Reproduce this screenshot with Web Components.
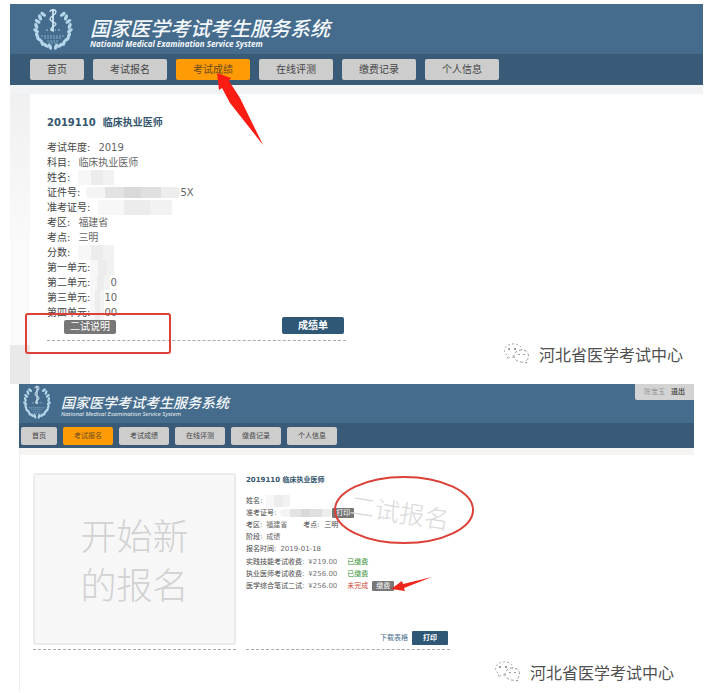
<!DOCTYPE html>
<html lang="zh-CN">
<head>
<meta charset="utf-8">
<title>国家医学考试考生服务系统</title>
<style>
  * { box-sizing: border-box; }
  body {
    margin: 0;
    background: #fff;
    color: #666;
    font: 10px/15px "DejaVu Sans", "Noto Sans CJK SC", sans-serif;
  }
  main { padding-top: 4px; }
</style>
</head>
<body>
<main>
  <score-screen></score-screen>
  <apply-screen></apply-screen>
</main>

<script>
(function () {
  'use strict';

  var TABS = ['首页', '考试报名', '考试成绩', '在线评测', '缴费记录', '个人信息'];

  function define(name, html, setup) {
    var template = document.createElement('template');
    template.innerHTML = '<style>* { box-sizing: border-box; }</style>' + html;
    customElements.define(name, class extends HTMLElement {
      constructor() {
        super();
        this.attachShadow({ mode: 'open' }).appendChild(template.content.cloneNode(true));
      }
      connectedCallback() {
        if (setup) setup(this, this.shadowRoot);
      }
    });
  }

  /* Laurel wreath: one side is generated and mirrored for the other. */
  function leaves() {
    var out = '';
    for (var i = 0; i < 10; i++) {
      var a = (100 + i * 15) * Math.PI / 180;
      var x = 20 + 17 * Math.cos(a);
      var y = 21 + 18 * Math.sin(a);
      out += '<ellipse cx="' + x.toFixed(1) + '" cy="' + y.toFixed(1) + '" rx="3.2" ry="1.7" transform="rotate(' +
        (i % 2 ? 35 : 70) + ' ' + x.toFixed(1) + ' ' + y.toFixed(1) + ')"/>';
    }
    return out;
  }

  define('exam-logo',
    '<style>:host { display: block; flex: none; } svg { display: block; width: 100%; height: 100%; }</style>' +
    '<svg viewBox="0 0 40 42" preserveAspectRatio="none" aria-hidden="true">' +
      '<g fill="#b4d6ea">' + leaves() + '</g>' +
      '<g fill="#b4d6ea" transform="translate(40 0) scale(-1 1)">' + leaves() + '</g>' +
      '<path d="M20 1v22" stroke="#e2f2fb" stroke-width="1.6"/>' +
      '<path d="M17 4c0-3 6-3 6 0s-6 4-6 7 6 3 6 5-5 3-5 5 3 2 3 2" fill="none" stroke="#cfe8f6" stroke-width="1.3"/>' +
      '<path d="M13 22h2m2 0h1m4 0h1m2 0h2" stroke="#a9cfe5"/>' +
      '<path d="M8 28h24M11 30h18M14 33h12M15 35h10" stroke="#83b0ce" stroke-dasharray="2 1"/>' +
    '</svg>');

  define('nav-tab',
    '<style>' +
      ':host { display: block; }' +
      'button {' +
        'display: block; height: var(--tab-height); padding: 0 var(--tab-pad);' +
        'border: 0; border-radius: 2px; background: #cdcdcd; color: #444;' +
        'font: inherit; font-size: var(--tab-font); line-height: 1; white-space: nowrap;' +
      '}' +
      ':host([active]) button { background: #ff9b05; color: #6b4a1c; }' +
    '</style>' +
    '<button type="button"><slot></slot></button>');

  define('site-banner',
    '<style>' +
      ':host {' +
        '--tab-height: 21px; --tab-pad: 17px; --tab-font: 10px;' +
        '--logo-width: 40px; --logo-height: 42px;' +
        'display: block; position: relative; background: #456c8c;' +
      '}' +
      ':host([compact]) { --tab-height: 18px; --tab-pad: 11px; --tab-font: 7px; --logo-width: 28px; --logo-height: 34px; }' +
      'header { display: flex; height: 50px; padding: 4px 0 0 23px; gap: 17px; }' +
      'exam-logo { width: var(--logo-width); height: var(--logo-height); }' +
      '.names { padding-top: 11px; color: #f4f8fb; font-style: italic; white-space: nowrap; }' +
      'h1 { margin: 0; font: italic 500 20px/20px "Liberation Sans", "Noto Sans CJK SC", sans-serif; }' +
      'p { margin: 0; font: italic 700 8px/10px "Open Sans", sans-serif; }' +
      'nav { display: flex; gap: 9px; padding: 5px 0 5px 20px; background: #395b78; }' +
      ':host([compact]) header { height: 39px; padding: 1px 0 0 4px; gap: 10px; }' +
      ':host([compact]) h1 { font-size: 14px; line-height: 14px; }' +
      ':host([compact]) p { font-size: 6px; line-height: 8px; font-weight: 400; }' +
      ':host([compact]) nav { gap: 6px; padding: 4px 0 3px 2px; }' +
      '.user { position: absolute; top: 0; right: 0; }' +
    '</style>' +
    '<header><exam-logo></exam-logo><div class="names">' +
      '<h1>国家医学考试考生服务系统</h1><p>National Medical Examination Service System</p>' +
    '</div></header>' +
    '<nav></nav><div class="user"><slot></slot></div>',
    function (host, root) {
      root.querySelector('nav').innerHTML = TABS.map(function (tab) {
        return '<nav-tab' + (tab === host.getAttribute('current') ? ' active' : '') + '>' + tab + '</nav-tab>';
      }).join('');
    });

  define('info-row',
    '<style>' +
      ':host { display: flex; align-items: center; height: var(--row, 15px); white-space: nowrap; }' +
      '.label { margin-right: var(--label-gap, 8px); color: #444; }' +
    '</style>' +
    '<span class="label"></span><slot></slot>',
    function (host, root) {
      root.querySelector('.label').textContent = host.getAttribute('label') + ':';
    });

  /* Pixelated patch over private data. */
  define('mosaic-patch',
    '<style>' +
      ':host {' +
        'display: inline-block; height: 100%; border-radius: 4px;' +
        'background:' +
          'linear-gradient(90deg, #f4f4f4 0 20%, #e3e3e3 20% 40%, #d9d9d9 40% 58%, #e0e0e0 58% 80%, #ededed 80%);' +
      '}' +
      ':host([light]) { background: linear-gradient(90deg, #f7f7f7 0 35%, #ececec 35% 70%, #f2f2f2 70%); border-radius: 0; }' +
    '</style>');

  define('wechat-mark',
    '<style>' +
      ':host {' +
        'display: flex; align-items: center; gap: 9px; color: #505050; white-space: nowrap;' +
        'font: 16px/20px "Noto Sans CJK SC", sans-serif; text-shadow: -1px -1px 0 #fff;' +
      '}' +
      'svg { display: block; width: 27px; height: 21px; }' +
    '</style>' +
    '<svg viewBox="0 0 27 21" fill="none" aria-hidden="true">' +
      '<path d="M11 14l-3 0-4 2 1-3C-1 9 1 2 9 1c6-1 10 3 10 6" stroke="#aaa" stroke-dasharray="2 2"/>' +
      '<path d="M19 7c-5 0-8 3-8 6 0 4 5 7 10 6l3 1-1-2c5-4 2-11-4-11z" stroke="#999" stroke-dasharray="3 2"/>' +
      '<path d="M6 5v2M12 5v2M16 11v1M21 11v1" stroke="#777" stroke-width="1.4"/>' +
    '</svg><slot></slot>');

  define('score-screen',
    '<style>' +
      ':host { display: block; position: relative; margin: 0 6px 0 10px; }' +
      '.body { padding: 9px 0 0 20px; background: linear-gradient(#f1f3f5 0 9px, #f0f0f0 9px, #fafafa 160px 260px, #e9e9e9 260px); }' +
      'section { padding: 21px 17px 43px; background: #fff; }' +
      '.record { max-width: 299px; border-bottom: 1px dashed #aaa; }' +
      'h2 { margin: 0 0 9px; color: #35566f; font-size: 10px; line-height: 16px; white-space: pre; }' +
      '.actions { display: flex; justify-content: space-between; align-items: flex-end; margin-top: -3px; padding: 0 2px 6px 17px; }' +
      'button { border: 0; border-radius: 2px; padding: 0 6px; height: 14px; background: #777; color: #fff; font: inherit; line-height: 1; }' +
      '.primary { height: 17px; padding: 0 16px; background: #2f5877; font-weight: 700; }' +
      '.frame { position: absolute; left: 15px; top: 309px; width: 146px; height: 41px; border: 2px solid #dc4038; border-radius: 3px; }' +
      '.arrow { position: absolute; left: 206px; top: 68px; width: 50px; height: 76px; }' +
      'wechat-mark { position: absolute; right: 20px; bottom: 20px; }' +
    '</style>' +
    '<site-banner current="考试成绩"></site-banner>' +
    '<div class="body"><section><div class="record">' +
      '<h2>2019110  临床执业医师</h2>' +
      '<info-row label="考试年度">2019</info-row>' +
      '<info-row label="科目">临床执业医师</info-row>' +
      '<info-row label="姓名"><mosaic-patch light style="width:36px"></mosaic-patch></info-row>' +
      '<info-row label="证件号" style="--label-gap:6px"><mosaic-patch style="width:94px;height:11px"></mosaic-patch>5X</info-row>' +
      '<info-row label="准考证号"><mosaic-patch light style="width:74px"></mosaic-patch></info-row>' +
      '<info-row label="考区">福建省</info-row>' +
      '<info-row label="考点">三明</info-row>' +
      '<info-row label="分数"><mosaic-patch light style="width:36px"></mosaic-patch></info-row>' +
      '<info-row label="第一单元" style="--label-gap:0px"><mosaic-patch light style="width:24px"></mosaic-patch></info-row>' +
      '<info-row label="第二单元" style="--label-gap:0px"><mosaic-patch light style="width:20px"></mosaic-patch>0</info-row>' +
      '<info-row label="第三单元" style="--label-gap:0px"><mosaic-patch light style="width:14px"></mosaic-patch>10</info-row>' +
      '<info-row label="第四单元" style="--label-gap:0px"><mosaic-patch light style="width:14px"></mosaic-patch>00</info-row>' +
      '<div class="actions"><button type="button">二试说明</button><button type="button" class="primary">成绩单</button></div>' +
    '</div></section></div>' +
    '<div class="frame"></div>' +
    '<svg class="arrow" viewBox="0 0 50 76" aria-hidden="true"><path d="M1 1L15 6 13 9 24 26 47 73 14 31 6 16 3 18z" fill="#fb1d13"/></svg>' +
    '<wechat-mark>河北省医学考试中心</wechat-mark>');

  define('apply-screen',
    '<style>' +
      ':host { display: block; position: relative; margin: 0 15px 0 19px; font-size: 7px; line-height: 12px; --row: 12px; --label-gap: 4px; }' +
      '.user { display: flex; gap: 6px; height: 16px; align-items: center; padding: 0 9px; background: #d3d3d3; color: #999; border-radius: 0 0 0 2px; }' +
      '.user a { color: #555; font-weight: 700; text-decoration: none; }' +
      '.body { padding-top: 7px; background: #f5f4f3; border-left: 1px solid #eee; }' +
      'section {' +
        'display: grid; grid-template-columns: minmax(0, 203px) minmax(0, 204px); gap: 10px;' +
        'padding: 18px 0 42px 13px; background: #fff;' +
      '}' +
      '.start, .record { border-bottom: 1px dashed #aaa; }' +
      '.start { padding-bottom: 4px; }' +
      '.start button {' +
        'display: block; width: 100%; height: 172px; border: 2px solid #ebebeb; border-radius: 3px; background: #f7f7f7;' +
        'color: #d2d2d2; font: 300 36px/49px "Noto Sans CJK SC", sans-serif;' +
      '}' +
      '.record { display: flex; flex-direction: column; padding: 1px 2px 4px 0; }' +
      'h2 { margin: 0 0 9px; color: #35566f; font-size: 7px; line-height: 12px; }' +
      '.fees { display: grid; grid-template-columns: auto auto auto 1fr; column-gap: 4px; margin-top: 1px; grid-auto-rows: 12px; align-items: center; color: #777; white-space: nowrap; }' +
      '.fees b { font-weight: 400; color: #444; }' +
      '.paid, .due { margin-left: 6px; }' +
      '.paid { color: #2f8f2f; }' +
      '.due { color: #cf4a35; }' +
      '.second { margin-left: 16px; color: #444; }' +
      'button.small { border: 0; border-radius: 1px; height: 10px; padding: 0 4px; background: #777; color: #fff; font: inherit; line-height: 1; }' +
      '.fees .small { justify-self: start; }' +
      '.actions { display: flex; justify-content: flex-end; align-items: center; gap: 4px; margin-top: auto; }' +
      '.actions a { color: #47708f; text-decoration: none; }' +
      '.actions button { border: 0; border-radius: 1px; height: 14px; padding: 0 11px; background: #2f5877; color: #fff; font: inherit; font-weight: 700; line-height: 1; }' +
      '.stamp { position: absolute; left: 331px; top: 112px; color: #d9d9d9; font: 300 25px/30px "Noto Sans CJK SC", sans-serif; transform: rotate(9deg); }' +
      '.ring { position: absolute; left: 314px; top: 91px; width: 142px; height: 70px; }' +
      '.arrow { position: absolute; left: 372px; top: 192px; width: 42px; height: 16px; }' +
      'wechat-mark { position: absolute; right: 20px; bottom: 10px; }' +
    '</style>' +
    '<site-banner compact current="考试报名"><div class="user"><span>陈宝玉</span><a href="#">退出</a></div></site-banner>' +
    '<div class="body"><section>' +
      '<div class="start"><button type="button">开始新<br>的报名</button></div>' +
      '<div class="record">' +
        '<h2>2019110 临床执业医师</h2>' +
        '<info-row label="姓名"><mosaic-patch light style="width:24px"></mosaic-patch></info-row>' +
        '<info-row label="准考证号"><mosaic-patch style="width:52px;height:8px"></mosaic-patch><button type="button" class="small">打印</button></info-row>' +
        '<info-row label="考区">福建省<span class="second">考点:&nbsp; 三明</span></info-row>' +
        '<info-row label="阶段">成绩</info-row>' +
        '<info-row label="报名时间">2019-01-18</info-row>' +
        '<div class="fees">' +
          '<b>实践技能考试收费:</b><span>¥219.00</span><span class="paid">已缴费</span><i></i>' +
          '<b>执业医师考试收费:</b><span>¥256.00</span><span class="paid">已缴费</span><i></i>' +
          '<b>医学综合笔试二试:</b><span>¥256.00</span><span class="due">未完成</span><button type="button" class="small">缴费</button>' +
        '</div>' +
        '<div class="actions"><a href="#">下载表格</a><button type="button">打印</button></div>' +
      '</div>' +
    '</section></div>' +
    '<div class="stamp">二试报名</div>' +
    '<svg class="ring" viewBox="0 0 142 70" aria-hidden="true"><ellipse cx="71" cy="35" rx="69" ry="33" fill="none" stroke="#dc4038" stroke-width="2"/></svg>' +
    '<svg class="arrow" viewBox="0 0 42 16" aria-hidden="true"><path d="M0 13L11 5 12 8 41 1 13 12 14 15z" fill="#f0261c"/></svg>' +
    '<wechat-mark>河北省医学考试中心</wechat-mark>');
})();
</script>
</body>
</html>
